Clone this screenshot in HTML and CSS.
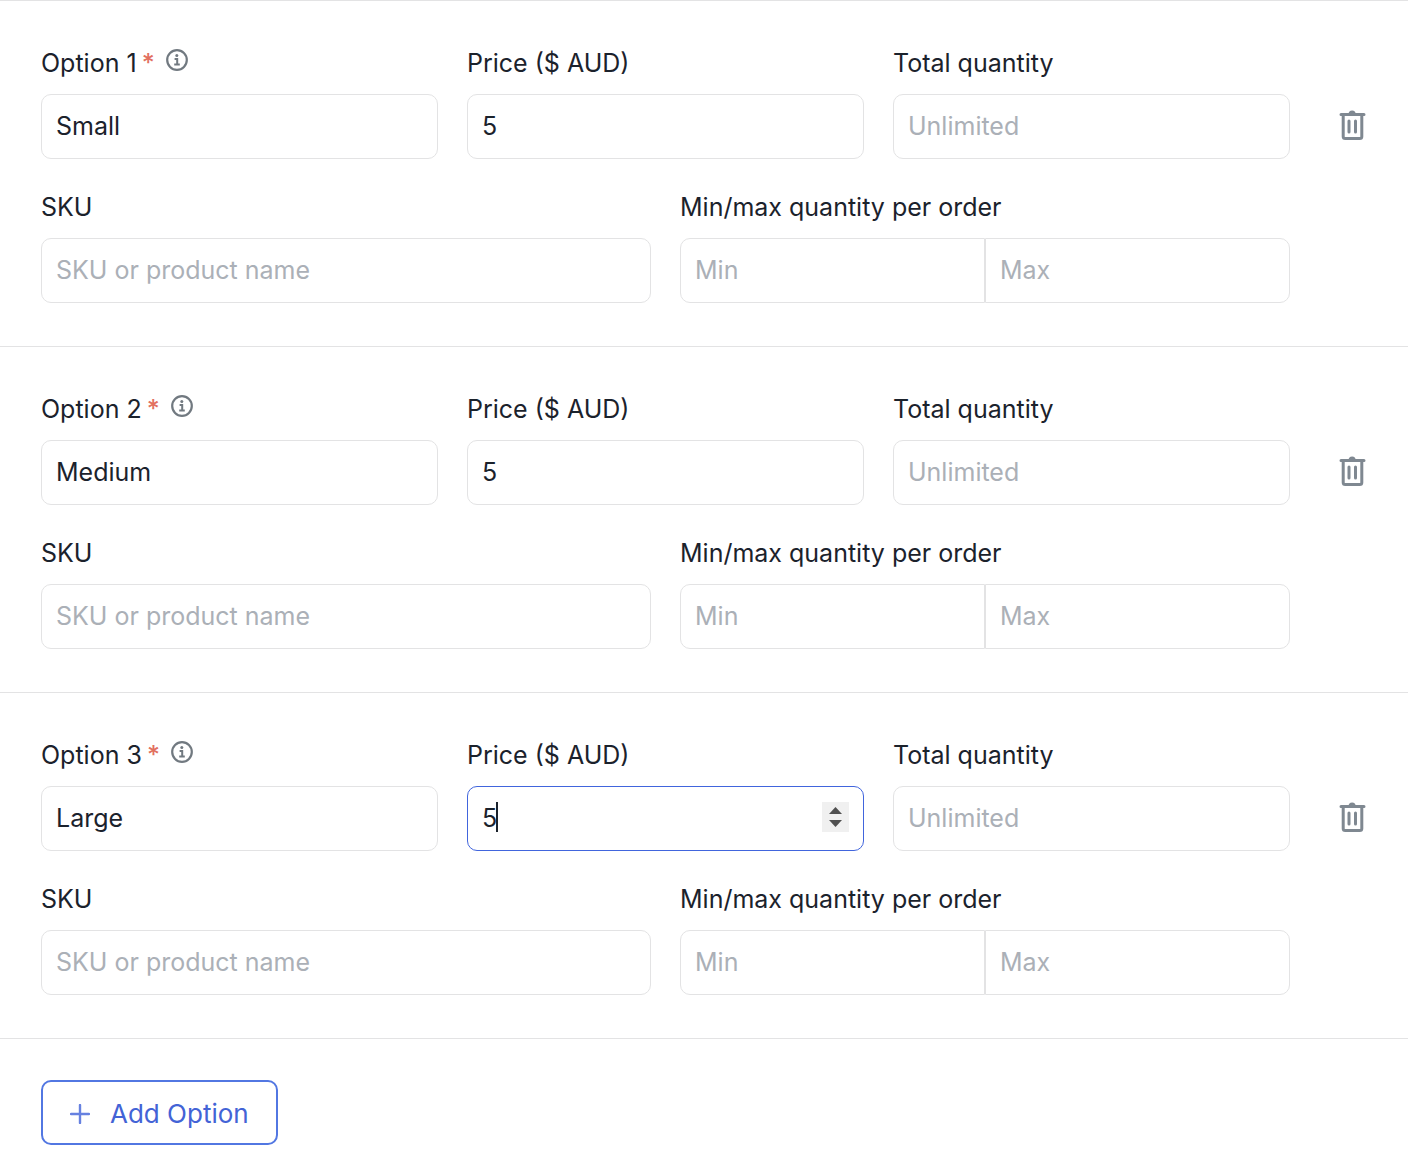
FILE: index.html
```html
<!DOCTYPE html>
<html lang="en">
<head>
<meta charset="utf-8">
<meta name="viewport" content="width=device-width, initial-scale=1">
<title>Product options</title>
<link rel="stylesheet" href="styles.css">
</head>
<body>
<svg class="sprite" aria-hidden="true">
  <symbol id="info" viewBox="0 0 22 22">
    <circle cx="11" cy="11" r="9.8" fill="none" stroke="currentColor" stroke-width="2.2"/>
    <circle cx="10.8" cy="6.6" r="1.5" fill="currentColor"/>
    <path d="M8.6 10h2.6v5.2M8.2 15.4h5.6" fill="none" stroke="currentColor" stroke-width="2"/>
  </symbol>
  <symbol id="trash" viewBox="0 0 30 30">
    <path d="M4 4.500h23M6.200 5v21.500a2 2 0 0 0 2 2h14.600a2 2 0 0 0 2-2V5" fill="none" stroke="currentColor" stroke-width="3" stroke-linecap="round"/>
    <path d="M11.600 4a3.500 3.500 0 0 1 7 0z" fill="currentColor"/>
    <path d="M12 11v11M18.500 11v11" fill="none" stroke="currentColor" stroke-width="3" stroke-linecap="round"/>
  </symbol>
</svg>
<form class="options">
  <section class="option">
    <div class="fields">
      <div class="field third">
        <div class="label-row"><label for="name1">Option 1<span class="required">*</span></label><svg class="info"><use href="#info"/></svg></div>
        <input class="input" id="name1" type="text" value="Small">
      </div>
      <div class="field third">
        <label for="price1">Price ($ AUD)</label>
        <input class="input" id="price1" type="number" value="5">
      </div>
      <div class="field third">
        <label for="total1">Total quantity</label>
        <input class="input" id="total1" type="number" placeholder="Unlimited">
      </div>
      <div class="field half">
        <label for="sku1">SKU</label>
        <input class="input" id="sku1" type="text" placeholder="SKU or product name">
      </div>
      <div class="field half">
        <label for="min1">Min/max quantity per order</label>
        <div class="range">
          <input class="input" id="min1" type="number" placeholder="Min">
          <input class="input" type="number" placeholder="Max" aria-label="Maximum quantity per order">
        </div>
      </div>
    </div>
    <button class="delete" type="button" aria-label="Delete option 1"><svg><use href="#trash"/></svg></button>
  </section>

  <section class="option">
    <div class="fields">
      <div class="field third">
        <div class="label-row"><label for="name2">Option 2<span class="required">*</span></label><svg class="info"><use href="#info"/></svg></div>
        <input class="input" id="name2" type="text" value="Medium">
      </div>
      <div class="field third">
        <label for="price2">Price ($ AUD)</label>
        <input class="input" id="price2" type="number" value="5">
      </div>
      <div class="field third">
        <label for="total2">Total quantity</label>
        <input class="input" id="total2" type="number" placeholder="Unlimited">
      </div>
      <div class="field half">
        <label for="sku2">SKU</label>
        <input class="input" id="sku2" type="text" placeholder="SKU or product name">
      </div>
      <div class="field half">
        <label for="min2">Min/max quantity per order</label>
        <div class="range">
          <input class="input" id="min2" type="number" placeholder="Min">
          <input class="input" type="number" placeholder="Max" aria-label="Maximum quantity per order">
        </div>
      </div>
    </div>
    <button class="delete" type="button" aria-label="Delete option 2"><svg><use href="#trash"/></svg></button>
  </section>

  <section class="option">
    <div class="fields">
      <div class="field third">
        <div class="label-row"><label for="name3">Option 3<span class="required">*</span></label><svg class="info"><use href="#info"/></svg></div>
        <input class="input" id="name3" type="text" value="Large">
      </div>
      <div class="field third">
        <label for="price3">Price ($ AUD)</label>
        <div class="number">
          <input class="input active" id="price3" type="number" value="5">
          <span class="caret"></span>
          <span class="stepper">
            <button type="button" aria-label="Increase price"><svg viewBox="0 0 13 7"><path d="M0 7 6.500 0 13 7z"/></svg></button>
            <button type="button" aria-label="Decrease price"><svg viewBox="0 0 13 7"><path d="M0 0h13L6.500 7z"/></svg></button>
          </span>
        </div>
      </div>
      <div class="field third">
        <label for="total3">Total quantity</label>
        <input class="input" id="total3" type="number" placeholder="Unlimited">
      </div>
      <div class="field half">
        <label for="sku3">SKU</label>
        <input class="input" id="sku3" type="text" placeholder="SKU or product name">
      </div>
      <div class="field half">
        <label for="min3">Min/max quantity per order</label>
        <div class="range">
          <input class="input" id="min3" type="number" placeholder="Min">
          <input class="input" type="number" placeholder="Max" aria-label="Maximum quantity per order">
        </div>
      </div>
    </div>
    <button class="delete" type="button" aria-label="Delete option 3"><svg><use href="#trash"/></svg></button>
  </section>

  <div class="actions">
    <button class="add" type="button"><svg viewBox="0 0 20 20"><path d="M10 1v18M1 10h18"/></svg>Add Option</button>
  </div>
</form>
</body>
</html>
```
FILE: styles.css
```css
* {
  box-sizing: border-box;
}

body {
  margin: 0;
  background: #fff;
  color: #1b222c;
  font: 400 25px/32px Inter, "Liberation Sans", sans-serif;
}

.sprite {
  position: absolute;
  width: 0;
  height: 0;
}

.option {
  display: flex;
  align-items: flex-start;
  gap: 47px;
  padding: 46px 41px 43px;
  border-top: 1px solid #e3e3e4;
}

.fields {
  flex: 1;
  display: grid;
  grid-template-columns: repeat(6, minmax(0, 1fr));
  gap: 32px 29px;
}

.field {
  display: flex;
  flex-direction: column;
  gap: 15px;
}

.third {
  grid-column: span 2;
}

.half {
  grid-column: span 3;
}

.label-row {
  display: flex;
  gap: 11px;
}

.required {
  margin-left: 5px;
  color: #e2705f;
  font-weight: 500;
}

.info {
  width: 22px;
  height: 22px;
  margin-top: 2px;
  color: #717980;
}

.input {
  width: 100%;
  min-width: 0;
  height: 65px;
  margin: 0;
  padding: 0 14px 2px;
  border: 1px solid #e3e3e4;
  border-radius: 10px;
  background: #fff;
  color: inherit;
  font: inherit;
  outline: none;
  appearance: textfield;
}

.input::-webkit-inner-spin-button {
  display: none;
}

.input::placeholder {
  color: #abb0b7;
  opacity: 1;
}

.input.active,
.input:focus {
  border-color: #4165dd;
}

.range {
  display: flex;
}

.range .input:first-child {
  border-radius: 10px 0 0 10px;
}

.range .input:last-child {
  border-radius: 0 10px 10px 0;
}

.number {
  position: relative;
}

.caret {
  position: absolute;
  top: 16px;
  left: 29px;
  width: 2px;
  height: 30px;
  background: #1b222c;
}

.stepper {
  position: absolute;
  top: 16px;
  right: 15px;
  display: flex;
  flex-direction: column;
  width: 27px;
  height: 30px;
  background: #f0f0f0;
}

.stepper button {
  flex: 1;
  display: flex;
  justify-content: center;
  align-items: flex-end;
  padding: 0 0 3px;
  border: 0;
  background: none;
}

.stepper button:last-child {
  align-items: flex-start;
  padding: 3px 0 0;
}

.stepper svg {
  width: 13px;
  height: 7px;
  fill: #505050;
}

.delete {
  width: 30px;
  height: 65px;
  margin-top: 47px;
  padding: 0 0 4px;
  border: 0;
  background: none;
  color: #7f8891;
}

.delete svg {
  display: block;
  width: 30px;
  height: 30px;
}

.actions {
  padding: 41px 41px 23px;
  border-top: 1px solid #e3e3e4;
}

.add {
  display: flex;
  align-items: center;
  gap: 20px;
  height: 65px;
  padding: 2px 27px 0;
  border: 2px solid #5277e2;
  border-radius: 10px;
  background: #fff;
  color: #4363d6;
  font: inherit;
  font-size: 26px;
}

.add svg {
  width: 20px;
  height: 20px;
  fill: none;
  stroke: #6681e0;
  stroke-width: 2.4;
  stroke-linecap: round;
}
```
